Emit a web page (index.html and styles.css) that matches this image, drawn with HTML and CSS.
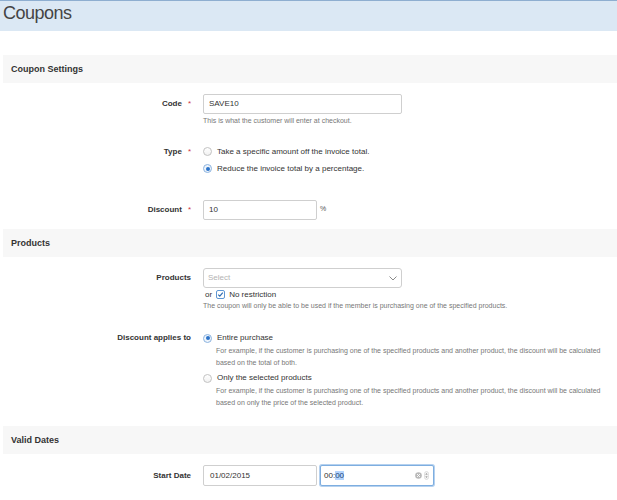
FILE: index.html
```html
<!DOCTYPE html>
<html lang="en">
<head>
<meta charset="utf-8">
<title>Coupons</title>
<link rel="stylesheet" href="styles.css">
</head>
<body>
<header class="page-head"><h1 class="page-title">Coupons</h1></header>
<main class="content">
  <section class="group">
    <h2 class="group-title">Coupon Settings</h2>
    <div class="group-body group-body-first">
      <div class="row">
        <div class="label">Code<span class="req">*</span></div>
        <div class="control">
          <div class="field field-wide">SAVE10</div>
          <div class="help help-field">This is what the customer will enter at checkout.</div>
        </div>
      </div>
      <div class="row row-radio">
        <div class="label label-radio">Type<span class="req">*</span></div>
        <div class="control">
          <div class="opt"><span class="radio"></span>Take a specific amount off the invoice total.</div>
          <div class="opt"><span class="radio radio-on"></span>Reduce the invoice total by a percentage.</div>
        </div>
      </div>
      <div class="row">
        <div class="label">Discount<span class="req">*</span></div>
        <div class="control inline">
          <div class="field field-short">10</div>
          <span class="unit">%</span>
        </div>
      </div>
    </div>
  </section>

  <section class="group">
    <h2 class="group-title">Products</h2>
    <div class="group-body group-body-loose">
      <div class="row">
        <div class="label">Products</div>
        <div class="control">
          <div class="field field-wide select">
            <span class="placeholder">Select</span>
            <svg class="chevron" width="8" height="5" viewBox="0 0 8 5"><polyline points="0.5,0.5 4,4 7.5,0.5" fill="none" stroke="#8a8a8a" stroke-width="1"/></svg>
          </div>
          <div class="or-line">
            <span>or</span>
            <svg class="check" width="9" height="9" viewBox="0 0 9 9"><rect x="0.5" y="0.5" width="8" height="8" rx="1.5" fill="#fff" stroke="#5f97d4"/><polyline points="2.2,4.6 3.8,6.2 6.8,2.6" fill="none" stroke="#2f6db3" stroke-width="1.2"/></svg>
            <span>No restriction</span>
          </div>
          <div class="help">The coupon will only be able to be used if the member is purchasing one of the specified products.</div>
        </div>
      </div>
      <div class="row row-detail">
        <div class="label label-detail">Discount applies to</div>
        <div class="control">
          <div class="opt opt-detail"><span class="radio radio-on"></span>Entire purchase</div>
          <div class="help help-detail">For example, if the customer is purchasing one of the specified products and another product, the discount will be calculated based on the total of both.</div>
          <div class="opt opt-detail opt-next"><span class="radio"></span>Only the selected products</div>
          <div class="help help-detail">For example, if the customer is purchasing one of the specified products and another product, the discount will be calculated based on only the price of the selected product.</div>
        </div>
      </div>
    </div>
  </section>

  <section class="group">
    <h2 class="group-title">Valid Dates</h2>
    <div class="group-body">
      <div class="row">
        <div class="label label-date">Start Date</div>
        <div class="control inline">
          <div class="field field-short field-date">01/02/2015</div>
          <div class="field field-short field-date field-focus">
            <span class="time">00:<span class="sel">00</span></span>
            <span class="time-tools">
              <svg width="7" height="7" viewBox="0 0 7 7"><circle cx="3.5" cy="3.5" r="3.3" fill="#b9b9b9"/><path d="M2.1 2.1 L4.9 4.9 M4.9 2.1 L2.1 4.9" stroke="#fff" stroke-width="1"/></svg>
              <svg width="5" height="9" viewBox="0 0 5 9"><rect x="0.5" y="0.5" width="4" height="8" rx="2" fill="#f4f4f4" stroke="#d0d0d0" stroke-width="0.6"/><path d="M1.3 3.6 L2.5 2.2 L3.7 3.6 Z M1.3 5.4 L2.5 6.8 L3.7 5.4 Z" fill="#777"/></svg>
            </span>
          </div>
        </div>
      </div>
    </div>
  </section>
</main>
</body>
</html>
```

FILE: styles.css
```css
html, body {
  margin: 0;
  padding: 0;
  background: #fff;
}

body {
  font-family: "Liberation Sans", Arial, Helvetica, sans-serif;
  color: #333;
}

.page-head {
  height: 30px;
  border-top: 1px solid #8eaed0;
  background: #dbe8f4;
  padding-left: 3px;
}

.page-title {
  margin: 0;
  font-size: 18px;
  font-weight: normal;
  line-height: 24px;
  letter-spacing: -0.5px;
  color: #444;
}

.content {
  padding: 24px 0 0 3px;
}

.group-title {
  margin: 0;
  height: 28px;
  line-height: 28px;
  padding-left: 8px;
  background: #f7f7f7;
  font-size: 9px;
  font-weight: bold;
  color: #333;
}

.group-body {
  display: flex;
  flex-direction: column;
  gap: 17px;
  padding: 11px 10px 11px 0;
}

.group-body-first {
  padding-bottom: 9px;
}

.group-body-loose {
  padding-bottom: 18px;
}

.row {
  display: grid;
  grid-template-columns: 188px 1fr;
  column-gap: 12px;
}

.row-radio {
  margin-bottom: 6px;
}

.row-detail {
  margin-top: 3px;
}

.label {
  text-align: right;
  font-size: 8px;
  font-weight: bold;
  line-height: 20px;
  color: #333;
}

.label-radio {
  line-height: 17px;
}

.label-detail {
  line-height: 14px;
}

.label-date {
  line-height: 21px;
}

.req {
  color: #d0343f;
  font-weight: normal;
  margin-left: 6px;
}

.control {
  min-width: 0;
}

.inline {
  display: flex;
  align-items: center;
  gap: 3px;
}

.field {
  box-sizing: border-box;
  height: 20px;
  border: 1px solid #cfcfcf;
  border-radius: 2px;
  background: #fff;
  font-size: 8px;
  line-height: 18px;
  padding-left: 5px;
  color: #333;
}

.field-wide {
  width: 199px;
}

.field-short {
  width: 114px;
}

.field-date {
  height: 21px;
  line-height: 19px;
  padding-left: 6px;
}

.field-focus {
  display: flex;
  align-items: center;
  justify-content: space-between;
  padding-left: 3px;
  padding-right: 4px;
  border-color: #7eaee0;
  box-shadow: 0 0 0 1px #b5d1ef;
}

.sel {
  background: #b3d4fc;
  color: #1d3f73;
}

.time-tools {
  display: flex;
  align-items: center;
  gap: 2px;
}

.time-tools svg {
  display: block;
}

.unit {
  font-size: 7px;
  color: #555;
  margin-top: -3px;
}

.help {
  font-size: 7px;
  line-height: 11px;
  color: #777;
}

.help-field {
  margin-top: 1px;
}

.help-detail {
  padding-left: 13px;
  line-height: 11.5px;
}

.opt {
  display: flex;
  align-items: center;
  gap: 5px;
  font-size: 8px;
  line-height: 17px;
  color: #333;
}

.opt-detail {
  line-height: 14px;
}

.opt-next {
  margin-top: 3px;
}

.radio {
  box-sizing: border-box;
  width: 9px;
  height: 9px;
  border: 1px solid #c2c2c2;
  border-radius: 50%;
  background: linear-gradient(#fff, #f1f1f1);
  flex: none;
  display: flex;
  align-items: center;
  justify-content: center;
}

.radio-on {
  border-color: #8db4e0;
  background: #eef4fb;
}

.radio-on::after {
  content: "";
  width: 4px;
  height: 4px;
  border-radius: 50%;
  background: #2b73c9;
}

.select {
  display: flex;
  align-items: center;
  justify-content: space-between;
  padding-left: 4px;
  padding-right: 4px;
  border-radius: 3px;
}

.placeholder {
  color: #b3b3b3;
}

.chevron {
  display: block;
}

.or-line {
  display: flex;
  align-items: center;
  gap: 4px;
  padding-left: 2px;
  margin-top: 1px;
  font-size: 8px;
  line-height: 11px;
  color: #333;
}

.check {
  display: block;
}
```
